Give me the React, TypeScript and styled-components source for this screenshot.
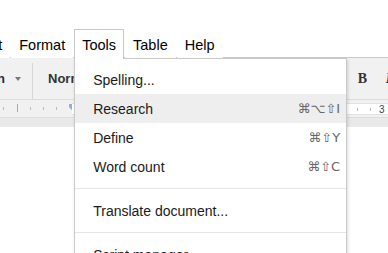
import React from 'react';
import styled, { createGlobalStyle } from 'styled-components';

const GlobalStyle = createGlobalStyle`
    html, body {
        margin: 0;
        padding: 0;
        background: #fff;
    }
    body {
        font-family: "Liberation Sans", Arial, "DejaVu Sans", sans-serif;
        color: #222;
    }
`;

const Page = styled.div`
    width: 388px;
    height: 253px;
    overflow: hidden;
    position: relative;
    background: #fff;
`;

const MenuBar = styled.div`
    display: flex;
    height: 28px;
    padding-top: 29px;
    margin-left: -42px;
    border-bottom: 1px solid #c9c9c9;
`;

const MenuTab = styled.div<{ $open?: boolean }>`
    position: relative;
    display: flex;
    align-items: center;
    height: 27px;
    padding: 1px 7px 0;
    margin-right: 1px;
    font-size: 14.5px;
    color: #000;
    border: 1px solid ${(p) => (p.$open ? '#c9c9c9' : 'transparent')};
    border-bottom: none;
    background: #fff;
    z-index: ${(p) => (p.$open ? 5 : 1)};

    &::after {
        content: '';
        display: ${(p) => (p.$open ? 'block' : 'none')};
        position: absolute;
        left: 0;
        right: 0;
        bottom: -1px;
        height: 1px;
        background: #fff;
        z-index: 3;
    }
`;

const Dropdown = styled.div`
    position: absolute;
    top: 28px;
    left: -1px;
    width: 271px;
    padding: 6px 0;
    background: #fff;
    border: 1px solid #c9c9c9;
    box-shadow: 1px 2px 3px rgba(0, 0, 0, 0.15);
    z-index: 2;
`;

const Item = styled.div<{ $active?: boolean }>`
    display: flex;
    align-items: center;
    justify-content: space-between;
    height: 29px;
    padding: 0 6px 0 18px;
    font-size: 14px;
    color: #1a1a1a;
    white-space: nowrap;
    background: ${(p) => (p.$active ? '#eeeeee' : 'transparent')};
`;

const Shortcut = styled.span`
    font-family: "DejaVu Sans", "Liberation Sans", sans-serif;
    font-size: 13px;
    color: #666;
`;

const Separator = styled.div`
    height: 1px;
    margin: 7px 0;
    background: #e5e5e5;
`;

const Toolbar = styled.div`
    display: flex;
    align-items: center;
    height: 41px;
    background: #f1f1f1;
    border-bottom: 1px solid #dcdcdc;
`;

const ToolGroup = styled.div<{ $width: number }>`
    display: flex;
    flex-shrink: 0;
    align-items: center;
    width: ${(p) => p.$width}px;
    height: 100%;
    font-size: 13px;
    font-weight: bold;
    color: #333;
`;

const ClippedLabel = styled.span`
    width: 5px;
    overflow: hidden;
    direction: rtl;
    color: #1f2a44;
`;

const Caret = styled.span`
    margin-left: 10px;
    width: 0;
    height: 0;
    border-top: 4px solid #777;
    border-left: 3px solid transparent;
    border-right: 3px solid transparent;
`;

const Divider = styled.div`
    flex-shrink: 0;
    width: 1px;
    height: 36px;
    margin-top: 5px;
    background: #d6d6d6;
`;

const StyleLabel = styled.span`
    padding-left: 15px;
`;

const ToolButton = styled.div<{ $italic?: boolean }>`
    display: flex;
    flex-shrink: 0;
    align-items: center;
    justify-content: center;
    width: 19px;
    margin-left: ${(p) => (p.$italic ? 7 : 0)}px;
    font-family: "Liberation Serif", "Times New Roman", serif;
    font-size: 14px;
    font-weight: bold;
    font-style: ${(p) => (p.$italic ? 'italic' : 'normal')};
    color: #333;
`;

const Ruler = styled.div`
    display: flex;
    height: 17px;
    background: #f1f1f1;
    border-bottom: 1px solid #dcdcdc;
`;

const RulerMargin = styled.div`
    width: 72px;
    flex-shrink: 0;
`;

const RulerPage = styled.div`
    position: relative;
    flex: 1;
    margin: 3px 0 2px;
    background: #fff;
    border-top: 1px solid #e2e2e2;
    border-bottom: 1px solid #e2e2e2;
`;

const RulerNumber = styled.span`
    position: absolute;
    top: 0;
    left: 307px;
    font-size: 10px;
    line-height: 12px;
    color: #444;
`;

const DocArea = styled.div`
    height: 120px;
    padding-top: 9px;
    background: #e9e9e9;
`;

const DocPage = styled.div`
    height: 100%;
    background: #fff;
`;

const menus = ['Insert', 'Format', 'Tools', 'Table', 'Help'];

const MarginTicks = () => (
    <svg width="72" height="17" viewBox="0 0 72 17">
        {[3.5, 30.5, 43.5, 56.5].map((x) => (
            <line key={x} x1={x} x2={x} y1="7" y2="10" stroke="#bbb" strokeWidth="1" />
        ))}
        <line x1="17.5" x2="17.5" y1="4" y2="12" stroke="#aaa" strokeWidth="1" />
        <rect x="69" y="4" width="5" height="3" fill="#8ab0ec" />
        <path d="M69 7 L74 7 L71.5 10 Z" fill="#8ab0ec" />
    </svg>
);

const PageTicks = () => (
    <svg width="316" height="11" viewBox="0 0 316 11" style={{ position: 'absolute', left: 0, top: 0 }}>
        {[285.5, 298.5].map((x) => (
            <line key={x} x1={x} x2={x} y1="4" y2="7" stroke="#bbb" strokeWidth="1" />
        ))}
    </svg>
);

const App = () => {
    return (
        <Page>
            <GlobalStyle />
            <MenuBar>
                {menus.map((m) => (
                    <MenuTab key={m} $open={m === 'Tools'}>
                        {m}
                        {m === 'Tools' && (
                            <Dropdown>
                                <Item>Spelling...</Item>
                                <Item $active>
                                    Research<Shortcut>⌘⌥⇧I</Shortcut>
                                </Item>
                                <Item>
                                    Define<Shortcut>⌘⇧Y</Shortcut>
                                </Item>
                                <Item>
                                    Word count<Shortcut>⌘⇧C</Shortcut>
                                </Item>
                                <Separator />
                                <Item>Translate document...</Item>
                                <Separator />
                                <Item>Script manager...</Item>
                            </Dropdown>
                        )}
                    </MenuTab>
                ))}
            </MenuBar>
            <Toolbar>
                <ToolGroup $width={32}>
                    <ClippedLabel>Arian</ClippedLabel>
                    <Caret />
                </ToolGroup>
                <Divider />
                <ToolGroup $width={320}>
                    <StyleLabel>Normal text</StyleLabel>
                </ToolGroup>
                <ToolButton>B</ToolButton>
                <ToolButton $italic>I</ToolButton>
            </Toolbar>
            <Ruler>
                <RulerMargin>
                    <MarginTicks />
                </RulerMargin>
                <RulerPage>
                    <PageTicks />
                    <RulerNumber>3</RulerNumber>
                </RulerPage>
            </Ruler>
            <DocArea>
                <DocPage />
            </DocArea>
        </Page>
    );
};

export default App;
